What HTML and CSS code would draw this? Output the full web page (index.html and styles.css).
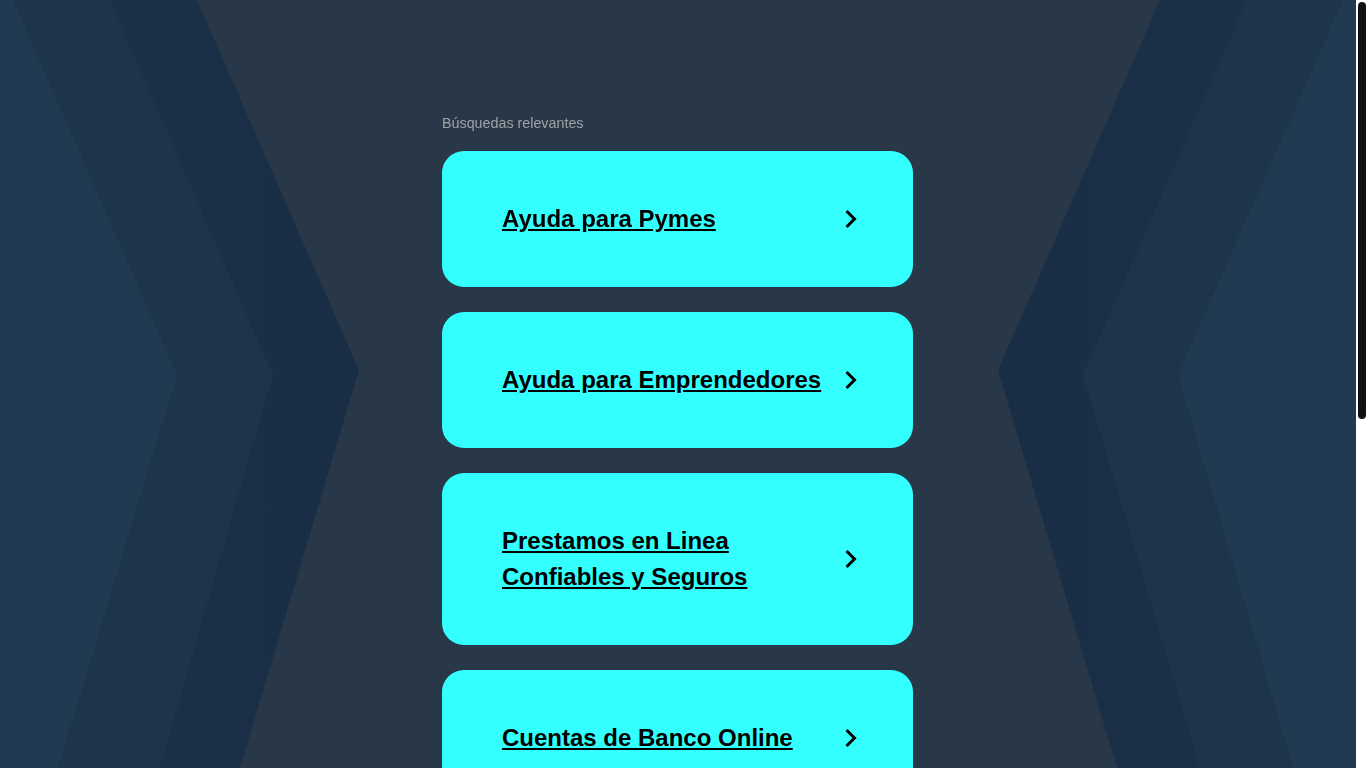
FILE: index.html
```html
<!DOCTYPE html>
<html lang="es">
<head>
  <meta charset="UTF-8">
  <title>Búsquedas relevantes</title>
  <link rel="stylesheet" href="styles.css">
</head>
<body>
<svg class="backdrop" viewBox="0 0 1356 768" preserveAspectRatio="none" aria-hidden="true">
  <defs>
    <linearGradient id="outerL" x1="0" y1="0" x2="1" y2="0">
      <stop offset="0" stop-color="#1c3249"/>
      <stop offset="1" stop-color="#192e45"/>
    </linearGradient>
    <linearGradient id="outerR" x1="1" y1="0" x2="0" y2="0">
      <stop offset="0" stop-color="#1c3249"/>
      <stop offset="1" stop-color="#192e45"/>
    </linearGradient>
  </defs>
  <polygon points="0,0 197,0 359,370 240,768 0,768" fill="url(#outerL)"/>
  <polygon points="0,0 110,0 273,375 160,768 0,768" fill="#1e344b"/>
  <polygon points="0,0 13,0 177,375 58,768 0,768" fill="#203a52"/>
  <polygon points="1356,0 1160,0 998,370 1117,768 1356,768" fill="url(#outerR)"/>
  <polygon points="1356,0 1247,0 1083,375 1200,768 1356,768" fill="#1e344b"/>
  <polygon points="1356,0 1343,0 1178,375 1293,768 1356,768" fill="#203a52"/>
</svg>

<div class="page">
  <p class="related-title">Búsquedas relevantes</p>
  <ul class="results">
    <li class="result">
      <a href="#" class="result-link">Ayuda para Pymes</a>
      <svg class="result-arrow" viewBox="0 0 14 22"><path d="M2.5 3 L10.5 11 L2.5 19"/></svg>
    </li>
    <li class="result">
      <a href="#" class="result-link">Ayuda para Emprendedores</a>
      <svg class="result-arrow" viewBox="0 0 14 22"><path d="M2.5 3 L10.5 11 L2.5 19"/></svg>
    </li>
    <li class="result">
      <a href="#" class="result-link">Prestamos en Linea Confiables y Seguros</a>
      <svg class="result-arrow" viewBox="0 0 14 22"><path d="M2.5 3 L10.5 11 L2.5 19"/></svg>
    </li>
    <li class="result">
      <a href="#" class="result-link">Cuentas de Banco Online</a>
      <svg class="result-arrow" viewBox="0 0 14 22"><path d="M2.5 3 L10.5 11 L2.5 19"/></svg>
    </li>
  </ul>
</div>

<div class="scroll-rail" aria-hidden="true">
  <div class="scroll-thumb"></div>
</div>
</body>
</html>
```

FILE: styles.css
```css
* {
  margin: 0;
  padding: 0;
  box-sizing: border-box;
}

html {
  background-color: #283848;
}

body {
  font-family: "Liberation Sans", Arial, sans-serif;
  color: #000;
  padding-right: 11px;
}

li {
  list-style: none;
}

.backdrop {
  position: fixed;
  top: 0;
  left: 0;
  width: calc(100% - 10px);
  height: 100%;
  z-index: -1;
}

/* page scrollbar look */
.scroll-rail {
  position: fixed;
  top: 0;
  right: 0;
  width: 10px;
  height: 100%;
  background-color: #fff;
}

.scroll-thumb {
  margin: 2px 0 0 2px;
  width: 8px;
  height: 417px;
  background-color: #111;
  border-radius: 4px;
}

.page {
  width: 471px;
  margin: 0 auto;
  padding: 114px 0 587px;
}

.related-title {
  font-size: 14.3px;
  line-height: 18px;
  color: #9fa2a6;
  margin-bottom: 19px;
}

.results {
  display: flex;
  flex-direction: column;
  gap: 25px;
}

.result {
  display: flex;
  align-items: center;
  gap: 10px;
  background-color: #33ffff;
  border-radius: 22px;
  padding: 50px 55px 50px 60px;
}

.result-link {
  flex: 1;
  font-size: 24px;
  font-weight: bold;
  line-height: 36px;
  color: #000;
  text-decoration: underline;
}

.result-arrow {
  flex: none;
  width: 14px;
  height: 22px;
}

.result-arrow path {
  fill: none;
  stroke: #000;
  stroke-width: 3;
}
```
